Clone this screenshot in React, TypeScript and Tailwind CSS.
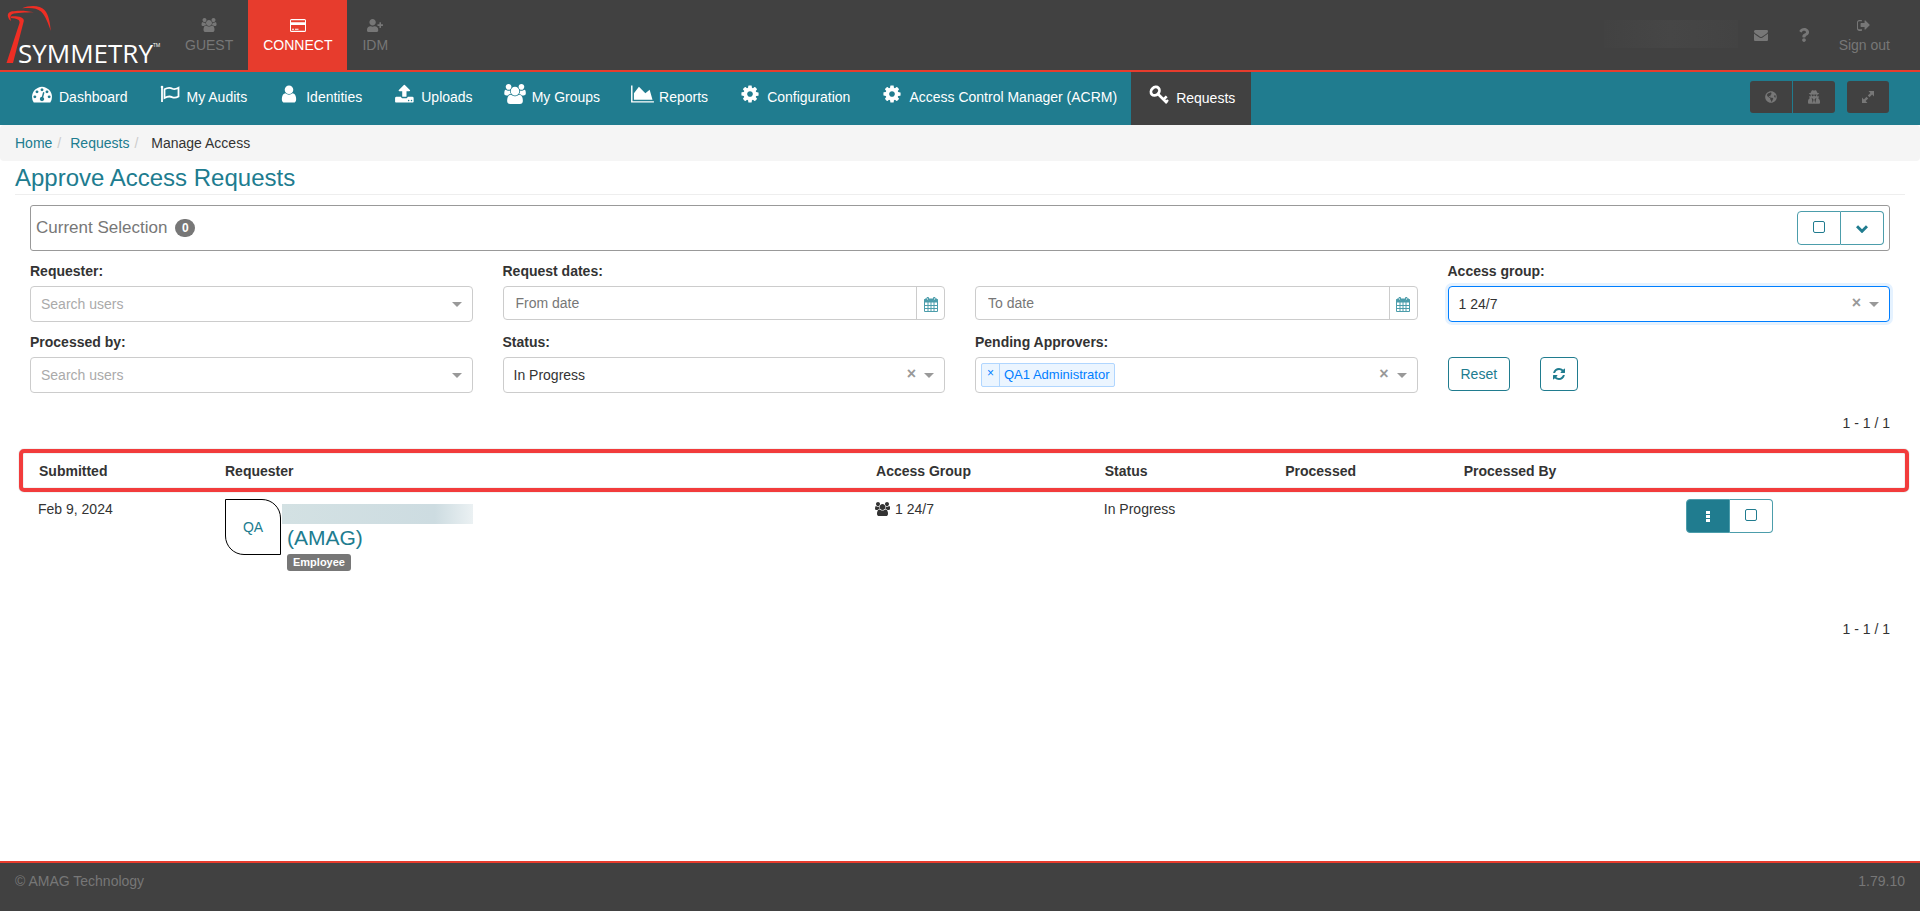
import type { ReactNode } from "react";
import { FaGlobeAmericas, FaQuestion, FaUserPlus, FaUserSecret } from "react-icons/fa";

const paths = {
  users:
    "M657 896q-162 5-265 128h-134q-82 0-138-40.5t-56-118.5q0-353 124-353 6 0 43.5 21t97.5 42.5 119 21.5q67 0 133-23-5 37-5 66 0 159 93 256zm1071 637q0 120-73 189.5t-194 69.5h-874q-121 0-194-69.5t-73-189.5q0-53 3.5-103.5t14-109 26.5-108.5 43-97.5 62-81 85.5-53.5 111.5-20q10 0 43 21.5t73 48 107 48 135 21.5 135-21.5 107-48 73-48 43-21.5q61 0 111.5 20t85.5 53.5 62 81 43 97.5 26.5 108.5 14 109 3.5 103.5zm-1024-1277q0 106-75 181t-181 75-181-75-75-181 75-181 181-75 181 75 75 181zm704 384q0 159-112.5 271.5t-271.5 112.5-271.5-112.5-112.5-271.5 112.5-271.5 271.5-112.5 271.5 112.5 112.5 271.5zm576 225q0 78-56 118.5t-138 40.5h-134q-103-123-265-128 93-97 93-256 0-29-5-66 66 23 133 23 59 0 119-21.5t97.5-42.5 43.5-21q124 0 124 353zm-128-609q0 106-75 181t-181 75-181-75-75-181 75-181 181-75 181 75 75 181z",
  dashboard:
    "M384 1152q0-53-37.5-90.5t-90.5-37.5-90.5 37.5-37.5 90.5 37.5 90.5 90.5 37.5 90.5-37.5 37.5-90.5zm192-448q0-53-37.5-90.5t-90.5-37.5-90.5 37.5-37.5 90.5 37.5 90.5 90.5 37.5 90.5-37.5 37.5-90.5zm428 481l101-382q6-26-7.5-48.5t-38.5-29.5-48 6.5-30 39.5l-101 382q-60 5-107 43.5t-63 98.5q-20 77 20 146t117 89 146-20 89-117q16-60-6-117t-72-91zm660-33q0-53-37.5-90.5t-90.5-37.5-90.5 37.5-37.5 90.5 37.5 90.5 90.5 37.5 90.5-37.5 37.5-90.5zm-640-640q0-53-37.5-90.5t-90.5-37.5-90.5 37.5-37.5 90.5 37.5 90.5 90.5 37.5 90.5-37.5 37.5-90.5zm448 192q0-53-37.5-90.5t-90.5-37.5-90.5 37.5-37.5 90.5 37.5 90.5 90.5 37.5 90.5-37.5 37.5-90.5zm320 448q0 261-141 483-19 29-54 29h-1402q-35 0-54-29-141-221-141-483 0-182 71-348t191-286 286-191 348-71 348 71 286 191 191 286 71 348z",
  user: "M1536 1399q0 109-62.5 187t-150.5 78h-854q-88 0-150.5-78t-62.5-187q0-85 8.5-160.5t31.5-152 58.5-131 94-89 134.5-34.5q131 128 313 128t313-128q76 0 134.5 34.5t94 89 58.5 131 31.5 152 8.5 160.5zm-256-887q0 159-112.5 271.5t-271.5 112.5-271.5-112.5-112.5-271.5 112.5-271.5 271.5-112.5 271.5 112.5 112.5 271.5z",
  upload:
    "M1344 1472q0-26-19-45t-45-19-45 19-19 45 19 45 45 19 45-19 19-45zm256 0q0-26-19-45t-45-19-45 19-19 45 19 45 45 19 45-19 19-45zm128-224v320q0 40-28 68t-68 28h-1472q-40 0-68-28t-28-68v-320q0-40 28-68t68-28h427q21 56 70.5 92t110.5 36h256q61 0 110.5-36t70.5-92h427q40 0 68 28t28 68zm-325-648q-17 40-59 40h-256v448q0 26-19 45t-45 19h-256q-26 0-45-19t-19-45v-448h-256q-42 0-59-40-17-39 14-69l448-448q18-19 45-19t45 19l448 448q31 30 14 69z",
  chart: "M2048 1536v128h-2048v-1536h128v1408h1920zm-384-1024l256 896h-1664v-576l448-576 576 576z",
  cog: "M1152 896q0-106-75-181t-181-75-181 75-75 181 75 181 181 75 181-75 75-181zm512-109v222q0 12-8 23t-20 13l-185 28q-19 54-39 91 35 50 107 138 10 12 10 25t-9 23q-27 37-99 108t-94 71q-12 0-26-9l-138-108q-44 23-91 38-16 136-29 186-7 28-36 28h-222q-14 0-24.5-8.5t-11.5-21.5l-28-184q-49-16-90-37l-141 107q-10 9-25 9-14 0-25-11-126-114-165-168-7-10-7-23 0-12 8-23 15-21 51-66.5t54-70.5q-27-50-41-99l-183-27q-13-2-21-12.5t-8-23.5v-222q0-12 8-23t19-13l186-28q14-46 39-92-40-57-107-138-10-12-10-24 0-10 9-23 26-36 98.5-107.5t94.5-71.5q13 0 26 10l138 107q44-23 91-38 16-136 29-186 7-28 36-28h222q14 0 24.5 8.5t11.5 21.5l28 184q49 16 90 37l142-107q9-9 24-9 13 0 25 10 129 119 165 170 7 8 7 22 0 12-8 23-15 21-51 66.5t-54 70.5q26 50 41 98l183 28q13 2 21 12.5t8 23.5z",
  refresh:
    "M1639 1056q0 5-1 7-64 268-268 434.5t-478 166.5q-146 0-282.5-55t-243.5-157l-129 129q-19 19-45 19t-45-19-19-45v-448q0-26 19-45t45-19h448q26 0 45 19t19 45-19 45l-137 137q71 66 161 102t187 36q134 0 250-65t186-179q11-17 53-117 8-23 30-23h192q13 0 22.5 9.5t9.5 22.5zm25-800v448q0 26-19 45t-45 19h-448q-26 0-45-19t-19-45 19-45l138-138q-148-137-349-137-134 0-250 65t-186 179q-11 17-53 117-8 23-30 23h-199q-13 0-22.5-9.5t-9.5-22.5v-7q65-268 270-434.5t480-166.5q146 0 284 55.5t245 156.5l130-129q19-19 45-19t45 19 19 45z",
  envelope:
    "M1792 710v794q0 66-47 113t-113 47h-1472q-66 0-113-47t-47-113v-794q44 49 101 87 362 246 497 345 57 42 92.5 65.5t94.5 48 110 24.5h2q51 0 110-24.5t94.5-48 92.5-65.5q170-123 498-345 57-39 100-87zm0-294q0 79-49 151t-122 123q-376 261-468 325-10 7-42.5 31t-54 38.5-52 32.5-57.5 27-50 9h-2q-23 0-50-9t-57.5-27-52-32.5-54-38.5-42.5-31q-91-64-262-182.5t-205-142.5q-62-42-117-115.5t-55-136.5q0-78 41.5-130t118.5-52h1472q65 0 112.500 47t47.500 113z",
  signOut:
    "M640 1440v96q0 64-30 96t-66 32h-256q-119 0-203.500-84.500t-84.500-203.500v-832q0-119 84.500-203.500t203.500-84.500h256q48 0 72 32t24 96q0 32-32 32h-320q-66 0-113 47t-47 113v704q0 66 47 113t113 47h288q64 0 64 0zm1000-544q0 26-19 45l-544 544q-19 19-45 19t-45-19-19-45v-288h-448q-26 0-45-19t-19-45v-384q0-26 19-45t45-19h448v-288q0-26 19-45t45-19 45 19l544 544q19 19 19 45z",
};

type IconProps = {
  path: string;
  className: string;
  viewBox?: string;
};

function Icon({ path, className, viewBox = "0 0 1792 1792" }: IconProps) {
  return (
    <svg viewBox={viewBox} fill="currentColor" aria-hidden="true" className={className}>
      <path d={path} />
    </svg>
  );
}

const usersBox = "64 0 1920 1792";

function FlagIcon() {
  return (
    <svg viewBox="0 0 20 20" className="h-5 w-5" fill="none" stroke="currentColor" strokeWidth="1.8" aria-hidden="true">
      <path d="M2 3.500v14.500" />
      <circle cx="2" cy="3" r="1.300" fill="currentColor" stroke="none" />
      <path d="M4.500 5.300c3-1.800 5-2.300 8-.6 2 1 3.500.4 6-.9v8.700c-2.500 1.500-4 1.800-6.500.6-2.500-1.300-4.500-.8-7.500.9z" />
    </svg>
  );
}

function KeyIcon() {
  return (
    <svg viewBox="0 0 20 20" className="h-5 w-5" fill="none" stroke="currentColor" aria-hidden="true">
      <ellipse cx="6.200" cy="6.200" rx="4.600" ry="3.800" strokeWidth="2.800" transform="rotate(-45 6.200 6.200)" />
      <path d="M8.500 8.500l9.500 9.500M14.500 14.500l3.200-3.200" strokeWidth="2.600" />
      <path d="M16.500 17.500l2.500-2.500" strokeWidth="2.400" />
    </svg>
  );
}

function CardIcon() {
  return (
    <svg viewBox="0 0 16 13" className="h-[13px] w-4" fill="currentColor" aria-hidden="true">
      <path
        fillRule="evenodd"
        d="M1.500 0h13a1.500 1.500 0 0 1 1.500 1.500v10a1.500 1.500 0 0 1-1.500 1.500h-13a1.500 1.500 0 0 1-1.500-1.500v-10a1.500 1.500 0 0 1 1.500-1.500zM1 1.300v2h14v-2zM1 6v5.700h14v-5.700zM2 9.800h2v1h-2zM5 9.800h3.500v1h-3.500z"
      />
    </svg>
  );
}

function CalendarIcon() {
  return (
    <svg viewBox="0 0 14 15" className="h-[15px] w-3.5" fill="none" stroke="currentColor" aria-hidden="true">
      <path d="M1 2h12v3h-12z" fill="currentColor" />
      <path d="M.5 2.500h13v12h-13zM.5 8.500h13M.5 11.500h13M4 5v9.500M7 5v9.500M10 5v9.500" />
      <path d="M3 .5h1.500v3h-1.500zM9.500 .5h1.500v3h-1.500z" fill="white" />
    </svg>
  );
}

function ExpandIcon() {
  return (
    <svg viewBox="0 0 12 12" className="h-3 w-3" fill="currentColor" aria-hidden="true">
      <path d="M6.500 0h5.500v5.500l-1.900-1.900-2.600 2.600-1.700-1.700 2.600-2.600zM5.500 12h-5.500v-5.500l1.900 1.900 2.600-2.600 1.700 1.700-2.600 2.600z" />
    </svg>
  );
}

function SquareIcon() {
  return (
    <svg viewBox="0 0 12 12" className="mb-0.5 h-3 w-3" fill="none" stroke="currentColor" aria-hidden="true">
      <rect x=".5" y=".5" width="11" height="11" rx="1.500" />
    </svg>
  );
}

function Logo() {
  return (
    <svg viewBox="0 0 170 70" className="h-[70px] w-[170px]" role="img" aria-label="Symmetry">
      <g fill="#ee2e24">
        <path d="M22 8.300C30 5 40 5.300 44.500 10C49 15 50 23 50.800 31C48 23 45.500 16 41 11.500C36.500 7.500 30 7.500 22 8.300z" />
        <path d="M34 12.300C27 10.300 17 10.300 12 11.300C8 12.200 7 15 8.500 18C9.300 20 10.300 20.500 11 21C10.300 18 10 15 12.500 14C16 12.700 26 12.600 34 12.300z" />
        <path d="M11 16.500C16 15.800 24.500 17 23.800 21L13 63H6.500L19.500 23C20 19.500 17 18.500 11 18z" />
      </g>
      <text x="18" y="63" fill="white" fontSize="26" className="font-['Open_Sans',sans-serif]">
        SYMMETRY
      </text>
      <text x="153" y="47" fill="white" fontSize="5" className="font-['Open_Sans',sans-serif]">
        TM
      </text>
    </svg>
  );
}

type TabProps = {
  label: string;
  icon: ReactNode;
  active?: boolean;
};

function Tab({ label, icon, active }: TabProps) {
  return (
    <a
      href="#"
      className={`flex h-[70px] flex-col items-center px-[15px] pt-[15px] leading-5 ${
        active ? "bg-[#e73c2d] text-white" : "text-[#777]"
      }`}
    >
      <span className="flex h-5 items-center">{icon}</span>
      {label}
    </a>
  );
}

const navItems = [
  { label: "Dashboard", icon: <Icon path={paths.dashboard} className="h-5 w-5" /> },
  { label: "My Audits", icon: <FlagIcon /> },
  { label: "Identities", icon: <Icon path={paths.user} className="h-5 w-5" /> },
  { label: "Uploads", icon: <Icon path={paths.upload} viewBox="0 0 1728 1792" className="h-5 w-5" /> },
  { label: "My Groups", icon: <Icon path={paths.users} viewBox={usersBox} className="h-5 w-[22px]" /> },
  { label: "Reports", icon: <Icon path={paths.chart} viewBox="0 0 2048 1792" className="h-5 w-[23px]" /> },
  { label: "Configuration", icon: <Icon path={paths.cog} className="h-5 w-5" /> },
  { label: "Access Control Manager (ACRM)", icon: <Icon path={paths.cog} className="h-5 w-5" /> },
  { label: "Requests", icon: <KeyIcon />, active: true },
];

type SelectProps = {
  id: string;
  label: string;
  value?: string;
  tag?: string;
  focused?: boolean;
};

function Select({ id, label, value, tag, focused }: SelectProps) {
  return (
    <div>
      <label htmlFor={id} className="mb-[5px] block font-bold leading-5">
        {label}
      </label>
      <div
        className={`flex h-9 items-center rounded border bg-white pr-2.5 ${
          focused ? "border-[#007eff] shadow-[0_0_0_3px_rgba(0,126,255,0.1)]" : "border-[#ccc]"
        }`}
      >
        {tag && (
          <span className="mb-px ml-[5px] flex h-6 items-center rounded-xs border border-[#b0d6ff] bg-[#ebf5ff] text-[13px] text-[#007eff]">
            <button type="button" aria-label={`Remove ${tag}`} className="h-full w-[18px] border-r border-[#b0d6ff] pb-1 text-xs leading-4">
              ×
            </button>
            <span className="px-1">{tag}</span>
          </span>
        )}
        <select
          id={id}
          className={`h-full min-w-0 flex-1 appearance-none bg-transparent px-2.5 outline-none ${
            value ? "text-[#333]" : "text-[#aaa]"
          }`}
        >
          <option>{value ?? (tag ? "" : "Search users")}</option>
        </select>
        {(value || tag) && (
          <button type="button" aria-label="Clear" className="mr-2 pb-0.5 text-base font-bold leading-4 text-[#999]">
            ×
          </button>
        )}
        <span className="border-x-[5px] border-t-[5px] border-x-transparent border-t-[#999]" />
      </div>
    </div>
  );
}

function DateInput({ label }: { label: string }) {
  return (
    <div className="flex h-[34px] rounded border border-[#ccc]">
      <input
        type="text"
        aria-label={label}
        placeholder={label}
        className="min-w-0 flex-1 px-3 pb-px outline-none placeholder:text-[#777]"
      />
      <button
        type="button"
        aria-label="Pick date"
        className="flex w-7 items-center justify-center border-l border-[#ccc] pt-0.5 text-[#4c9dab]"
      >
        <CalendarIcon />
      </button>
    </div>
  );
}

const columns = [
  { title: "Submitted", width: "w-[10%]" },
  { title: "Requester", width: "w-[35%]" },
  { title: "Access Group", width: "w-[12.3%]" },
  { title: "Status", width: "w-[9.7%]" },
  { title: "Processed", width: "w-[9.6%]" },
  { title: "Processed By", width: "w-[12%]" },
  { title: "", width: "w-[11.4%]" },
];

const outlineButton = "flex h-[34px] items-center justify-center rounded border border-[#207c8f] px-3 text-[#207c8f]";
const darkButton = "flex h-8 w-[42px] items-center justify-center bg-[#414141] text-[#777]";

export default function App() {
  return (
    <div className="flex min-h-screen flex-col bg-white font-['Liberation_Sans',Arial,sans-serif] text-sm leading-5 text-[#333]">
      <header className="flex border-b-2 border-[#e73c2d] bg-[#414141] pr-[15px]">
        <a href="#">
          <Logo />
        </a>
        <Tab label="GUEST" icon={<Icon path={paths.users} viewBox={usersBox} className="h-3.5 w-4" />} />
        <Tab label="CONNECT" icon={<CardIcon />} active />
        <Tab label="IDM" icon={<FaUserPlus className="h-[13px] w-4" />} />
        <div className="ml-auto flex items-center text-[#777]">
          <span className="mb-0.5 h-7 w-[134px] bg-linear-to-r from-[#424242] via-[#464646] to-[#434343]" />
          <a href="#" aria-label="Messages" className="pl-4 pr-[15px]">
            <Icon path={paths.envelope} className="h-3.5 w-3.5" />
          </a>
          <a href="#" aria-label="Help" className="pl-[15px] pr-3.5">
            <FaQuestion className="h-3.5 w-3" />
          </a>
          <Tab label="Sign out" icon={<Icon path={paths.signOut} className="h-3.5 w-3.5" />} />
        </div>
      </header>

      <nav className="flex bg-[#207c8f] pl-3.5 pr-[31px] text-white">
        {navItems.map((item) => (
          <a
            key={item.label}
            href="#"
            className={`flex h-[53px] items-start pl-[15px] ${
              item.active ? "bg-[#414141] pr-4 pt-[13px]" : "pr-3.5 pt-3"
            }`}
          >
            <span className="mr-1 flex w-[26px] justify-center">{item.icon}</span>
            <span className="pt-[3px]">{item.label}</span>
          </a>
        ))}
        <div className="ml-auto flex pt-[9px]">
          <button aria-label="Language" className={`${darkButton} rounded-l-[3px]`}>
            <FaGlobeAmericas className="h-3 w-3" />
          </button>
          <button aria-label="Impersonate" className={`${darkButton} ml-px rounded-r-[3px]`}>
            <FaUserSecret className="h-3.5 w-3" />
          </button>
          <button aria-label="Full screen" className={`${darkButton} ml-3 rounded-[3px]`}>
            <ExpandIcon />
          </button>
        </div>
      </nav>

      <ol className="flex rounded bg-[#f5f5f5] px-[15px] py-2">
        <li>
          <a href="#" className="text-[#207c8f]">
            Home
          </a>
          <span className="px-[5px] text-[#ccc]">/</span>
        </li>
        <li className="pl-1">
          <a href="#" className="text-[#207c8f]">
            Requests
          </a>
          <span className="px-[5px] text-[#ccc]">/</span>
        </li>
        <li className="pl-2">Manage Access</li>
      </ol>

      <main className="flex-1 px-[15px]">
        <h1 className="border-b border-[#eee] pb-px pt-0.5 text-2xl leading-[30px] text-[#207c8f]">
          Approve Access Requests
        </h1>

        <div className="px-[15px]">
          <section className="mt-2.5 flex items-center justify-between rounded-[3px] border border-[#999] p-[5px]">
            <h2 className="flex items-center gap-2 text-[17px] text-[#777]">
              Current Selection
              <span className="flex h-[18px] w-5 items-center justify-center rounded-full bg-[#777] text-xs font-bold text-white">
                0
              </span>
            </h2>
            <div className="flex">
              <button
                aria-label="Select all"
                className="flex h-[34px] w-11 items-center justify-center rounded-l border border-[#4c9dab] text-[#207c8f]"
              >
                <SquareIcon />
              </button>
              <button
                aria-label="Expand selection"
                className="flex h-[34px] w-[43px] items-center justify-center rounded-r border border-l-0 border-[#4c9dab] text-[#207c8f]"
              >
                <svg viewBox="0 0 12 8" className="mt-0.5 h-2 w-3" fill="none" stroke="currentColor" strokeWidth="3" aria-hidden="true">
                  <path d="M1 1.200l5 5 5-5" />
                </svg>
              </button>
            </div>
          </section>

          <form className="mt-2.5 grid grid-cols-4 gap-x-[30px] gap-y-2.5">
            <Select id="requester" label="Requester:" />
            <div>
              <div className="mb-[5px] font-bold">Request dates:</div>
              <DateInput label="From date" />
            </div>
            <div className="pt-[25px]">
              <DateInput label="To date" />
            </div>
            <Select id="access-group" label="Access group:" value="1 24/7" focused />
            <Select id="processed-by" label="Processed by:" />
            <Select id="status" label="Status:" value="In Progress" />
            <Select id="approvers" label="Pending Approvers:" tag="QA1 Administrator" />
            <div className="flex gap-[30px] pt-[25px]">
              <button type="reset" className={outlineButton}>
                Reset
              </button>
              <button type="button" aria-label="Refresh" className={outlineButton}>
                <Icon path={paths.refresh} viewBox="128 128 1536 1536" className="h-3 w-3" />
              </button>
            </div>
          </form>

          <p className="mt-5 text-right">1 - 1 / 1</p>

          <div className="relative mt-5">
            <table className="w-full table-fixed border-collapse text-left">
              <thead>
                <tr className="border-b-2 border-transparent">
                  {columns.map((column) => (
                    <th key={column.title} className={`${column.width} py-2 pl-[9px] leading-5`}>
                      {column.title}
                    </th>
                  ))}
                </tr>
              </thead>
              <tbody>
                <tr className="align-top">
                  <td className="p-2">Feb 9, 2024</td>
                  <td className="py-2 pl-[9px]">
                    <div className="flex gap-px">
                      <div className="flex h-14 w-14 items-center justify-center rounded-bl-[19px] rounded-tr-[19px] border border-black text-[#207c8f]">
                        QA
                      </div>
                      <div className="pt-[5px]">
                        <div className="h-5 w-[191px] bg-linear-to-r from-[#d3e1e3] via-[#cddce1] via-80% to-[#ebf1f3]" />
                        <a href="#" className="block pb-0.5 pl-[5px] text-[21px] leading-7 text-[#207c8f]">
                          (AMAG)
                        </a>
                        <span className="ml-[5px] block h-[17px] w-fit rounded-[3px] bg-[#777] px-1.5 text-[11px] font-bold leading-[17px] text-white">
                          Employee
                        </span>
                      </div>
                    </div>
                  </td>
                  <td className="p-2">
                    <span className="flex items-center gap-[5px]">
                      <Icon path={paths.users} viewBox={usersBox} className="h-3.5 w-[15px]" />1 24/7
                    </span>
                  </td>
                  <td className="p-2">In Progress</td>
                  <td />
                  <td />
                  <td className="p-2">
                    <div className="flex">
                      <button
                        aria-label="Actions"
                        className="flex h-[34px] w-11 items-center justify-center rounded-l border border-[#4c9dab] bg-[#207c8f] text-white"
                      >
                        <svg viewBox="0 0 4 11" className="h-[11px] w-1" fill="currentColor" aria-hidden="true">
                          <path d="M0 0h4v3h-4zM0 4h4v3h-4zM0 8h4v3h-4z" />
                        </svg>
                      </button>
                      <button
                        aria-label="Select request"
                        className="flex h-[34px] w-[43px] items-center justify-center rounded-r border border-l-0 border-[#4c9dab] text-[#207c8f]"
                      >
                        <SquareIcon />
                      </button>
                    </div>
                  </td>
                </tr>
              </tbody>
            </table>
            {/* highlight around the header row */}
            <div className="pointer-events-none absolute -left-[11px] -right-[19px] -top-1 h-[43px] rounded-[5px] border-4 border-[#f23c3c] shadow-[0_0_1px_rgba(0,0,0,0.5),inset_0_0_1px_rgba(0,0,0,0.5)]" />
          </div>

          <p className="mt-10 text-right">1 - 1 / 1</p>
        </div>
      </main>

      <footer className="flex h-[50px] justify-between border-t-2 border-[#e73c2d] bg-[#414141] px-[15px] pt-2 text-[#777]">
        <span>© AMAG Technology</span>
        <span>1.79.10</span>
      </footer>
    </div>
  );
}
